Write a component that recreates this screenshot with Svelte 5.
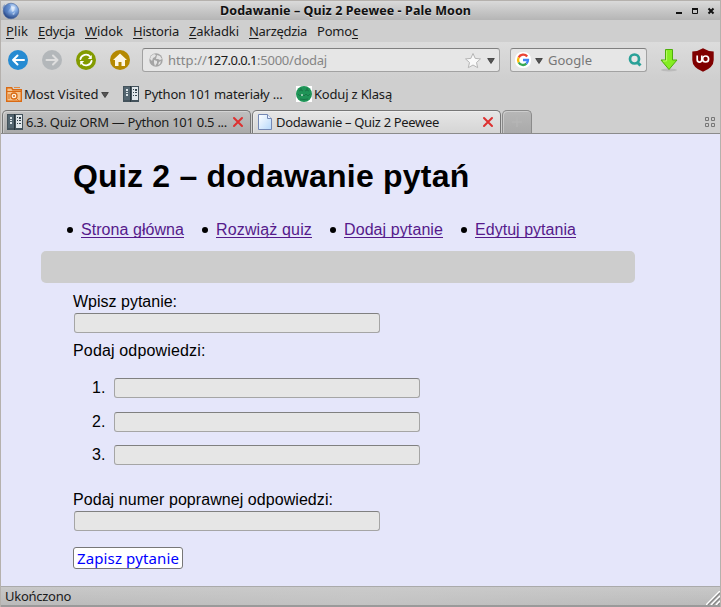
<script>
  const menu = [
    ['', 'P', 'lik', 22, 10],
    ['', 'E', 'dycja', 37, 10],
    ['', 'W', 'idok', 38, 10],
    ['', 'H', 'istoria', 46, 10],
    ['', 'Z', 'akładki', 50, 10],
    ['', 'N', 'arzędzia', 58, 10],
    ['Pomo', 'c', '', 41, 0]
  ];
  const links = [
    ['Strona główna', 103],
    ['Rozwiąż quiz', 96],
    ['Dodaj pytanie', 99],
    ['Edytuj pytania', 101]
  ];

  // Spreads the letters of a label over the given width.
  function fit(node, width) {
    const natural = node.getBoundingClientRect().width;
    const count = node.textContent.length;
    node.style.letterSpacing = (width - natural) / count + 'px';
  }
</script>

{#snippet book()}
  <svg class="i16" width="16" height="16" viewBox="0 0 16 16">
    <path d="M0 0h16v16H0z" fill="#43525b" />
    <path d="M1 1h6v13H1z" fill="#536570" /><path d="M9 1h6v13H9z" fill="#e0e6ea" />
    <path d="M3 3h2v2H3zM3 6h2v1H3zM3 8h2v2H3z" fill="#dce4e8" />
    <path d="M10 3h1v1h-1zM12 3h2v2h-2zM10 6h1v1h-1zM12 6h2v1h-2zM10 9h1v1h-1zM12 9h2v1h-2z" fill="#34434c" />
    <path d="M7 0h1v16H7z" fill="#26343c" />
  </svg>
{/snippet}

{#snippet caret()}
  <svg class="caret" width="8" height="6" viewBox="0 0 8 6"><path d="M.7.5h6.600L4 5.500z" fill="#555" stroke="#333" stroke-width=".8" /></svg>
{/snippet}

{#snippet cross()}
  <svg width="12" height="12" viewBox="0 0 12 12"><path d="M2 2l8 8M10 2l-8 8" stroke="#dd3030" stroke-width="2" stroke-linecap="round" /></svg>
{/snippet}

<div class="window">
  <header class="title">
    <svg class="globe" width="18" height="18" viewBox="0 0 18 18">
      <defs><radialGradient id="moon" cx=".62" cy=".3" r=".75"><stop offset="0" stop-color="#dce9fb" /><stop offset=".4" stop-color="#7ca5df" /><stop offset="1" stop-color="#1c3b7c" /></radialGradient></defs>
      <circle cx="9" cy="9" r="7.800" fill="url(#moon)" stroke="#4b689d" stroke-width=".6" />
      <path d="M3 5q3-4 5-2t-1 5-1 5-3-3 0-8" fill="#4a76bd" opacity=".5" />
      <path d="M9 4l4 1-1 4-2 1zM10 12l3-2-1 3z" fill="#eef5ff" opacity=".55" />
    </svg>
    <b use:fit={251}>Dodawanie – Quiz 2 Peewee - Pale Moon</b>
    <svg class="controls" width="40" height="8" viewBox="0 0 40 8">
      <path d="M1 5h6v2H1z" fill="#111" /><path d="M17.5 1.5h5v5h-5z" fill="none" stroke="#111" /><path d="M17 1h6v2h-6z" fill="#111" />
      <path d="M33.5 1.500l5 5M38.500 1.500l-5 5" stroke="#111" stroke-width="2" />
    </svg>
  </header>

  <nav class="menu">
    {#each menu as [pre, key, post, w, gap]}
      <div style:width="{w + gap}px"><span use:fit={w}>{pre}<u>{key}</u>{post}</span></div>
    {/each}
  </nav>

  <div class="toolbar">
    <svg class="nav" width="124" height="22" viewBox="0 0 124 22" fill="none" stroke-linecap="round" stroke-linejoin="round">
      <circle cx="11" cy="11" r="10" fill="#268bd2" /><path d="M6 11h11M10.500 6.500L6 11l4.500 4.500" stroke="#fff" stroke-width="2" />
      <circle cx="45" cy="11" r="10" fill="#b3b7ba" /><path d="M39.500 11h11M46 6.500l4.500 4.500-4.500 4.500" stroke="#dedede" stroke-width="2" />
      <circle cx="79" cy="11" r="10" fill="#839b00" />
      <path d="M73.400 10a5.700 5.700 0 0 1 9.800-2.500M84.600 12a5.700 5.700 0 0 1-9.800 2.500" stroke="#fff" stroke-width="1.800" />
      <path d="M84.800 6v4h-4zM73.200 16v-4h4z" fill="#fff" />
      <circle cx="113" cy="11" r="10" fill="#b58900" /><path d="M113 4.500l7 6.500h-2v6h-3.500v-4h-3v4H108v-6h-2z" fill="#fdf6e3" />
    </svg>
    <div class="url field">
      <svg width="14" height="14" viewBox="0 0 14 14">
        <circle cx="7" cy="7" r="6.700" fill="#a5a5a5" />
        <path d="M2 3l3-2 2 1-1 2-2 1-1 3-2-2zM8 2l3 1 2 3-2 1-2-1-2 0zM5 7l3 1 0 2-2 3-1-3zM10 9l2-1-1 3-2 1z" fill="#e4e4e4" />
      </svg>
      <span class="address"><i use:fit={39}>http://</i><em use:fit={50}>127.0.0.1</em><i use:fit={70}>:5000/dodaj</i></span>
      <svg class="star" width="18" height="17" viewBox="0 0 18 17"><path d="M9 1.500l2.200 4.900 5.300.5-4 3.600 1.200 5.200L9 13l-4.700 2.700 1.200-5.200-4-3.600 5.300-.5z" fill="#f9f9f9" stroke="#b5b5b5" stroke-linejoin="round" /></svg>
      {@render caret()}
    </div>
    <div class="search field">
      <svg width="16" height="16" viewBox="0 0 16 16">
        <rect width="16" height="16" rx="7" fill="#fff" />
        <g fill="none" stroke-width="2.300"><path d="M12.200 4.500A5 5 0 0 0 3.700 5.500" stroke="#ea4335" /><path d="M3.700 5.500a5 5 0 0 0 0 5" stroke="#fbbc05" /><path d="M3.700 10.500a5 5 0 0 0 7.700 1.200" stroke="#34a853" /><path d="M8 8h5a5 5 0 0 1-1.600 3.700" stroke="#4285f4" /></g>
      </svg>
      {@render caret()}
      <span class="hint" use:fit={44}>Google</span>
      <svg class="lens" width="14" height="14" viewBox="0 0 14 14"><circle cx="6.500" cy="6" r="4.500" fill="none" stroke="#2aa198" stroke-width="2.700" /><path d="M9 9l3.500 3.500" stroke="#2aa198" stroke-width="3" /></svg>
    </div>
    <svg class="download" width="20" height="24" viewBox="0 0 20 24">
      <ellipse cx="10" cy="22" rx="8" ry="1.500" fill="#bbb" />
      <path d="M6.500 1.500h7v10.500h4.500l-8 9.500-8-9.500h4.500z" fill="#85ed22" stroke="#4eae0b" stroke-linejoin="round" /><path d="M7.600 2.500V13H4" fill="none" stroke="#bdfb69" />
    </svg>
    <svg class="shield" width="22" height="24" viewBox="0 0 22 24">
      <path d="M11 .3Q16 3.500 21.700 3.500V12q0 7.500-10.700 11.700Q.3 19.500.3 12V3.500Q6 3.500 11 .3z" fill="#800000" />
      <path d="M5.200 7.500v4.300a2.300 2.300 0 0 0 4.600 0V7.500" fill="none" stroke="#fff" stroke-width="1.700" /><circle cx="13.600" cy="11" r="3" fill="none" stroke="#fff" stroke-width="1.700" />
    </svg>
  </div>

  <div class="bookmarks">
    <svg class="i16" width="16" height="16" viewBox="0 0 16 16">
      <path d="M.700 15.300V1.700h5l1 2h8.600v11.600z" fill="#f6c48c" stroke="#d96a13" stroke-width="1.400" /><path d="M1 5.500h14" stroke="#d96a13" /><path d="M8 1.500h6" stroke="#e58a3c" />
      <circle cx="8" cy="10" r="3" fill="#fff3df" stroke="#d96a13" stroke-width="1.300" /><circle cx="8" cy="10" r="1" fill="#d96a13" /><path d="M10.500 12.500l2 2M3 8v5" stroke="#d96a13" />
    </svg>
    <div class="b1"><span use:fit={74.5}>Most Visited</span></div>
    {@render caret()}
    <div class="b2">{@render book()}</div>
    <div class="b3"><span use:fit={138.5}>Python 101 materiały ...</span></div>
    <svg class="i16" width="16" height="16" viewBox="0 0 16 16"><path d="M0 0h16v16H0z" fill="#fff" /><circle cx="8" cy="8" r="8" fill="#1f9457" /><path d="M4 3h2M10 3h2M3 5q2-2 4 0M9 5q2-2 4 0M2 8l2 2 2-2 2 2 2-2 2 2 2-2M4 13q4 1 8 0" fill="none" stroke="#166a40" opacity=".7" /><circle cx="6" cy="9" r="1" fill="#bde0cc" /></svg>
    <div class="b4"><span use:fit={78}>Koduj z Klasą</span></div>
  </div>

  <div class="tabs">
    <div class="tab back">{@render book()}<div class="label"><span use:fit={201}>6.3. Quiz ORM — Python 101 0.5 ...</span></div>{@render cross()}</div>
    <div class="tab front">
      <svg width="14" height="16" viewBox="0 0 14 16"><defs><linearGradient id="page" x2="1" y2="1"><stop stop-color="#fff" /><stop offset="1" stop-color="#b5d8fb" /></linearGradient></defs><path d="M.5.5h9l4 4v11H.5z" fill="url(#page)" stroke="#7488b4" /><path d="M9.500.5v4h4" fill="#e9f2ff" stroke="#7488b4" /></svg>
      <div class="label"><span use:fit={163}>Dodawanie – Quiz 2 Peewee</span></div>{@render cross()}
    </div>
    <div class="tab plus"><svg width="10" height="10" viewBox="0 0 10 10"><path d="M5 0v10M0 5h10" stroke="#b5b5b5" stroke-width="1.500" /></svg></div>
    <svg class="groups" width="10" height="10" viewBox="0 0 10 10" fill="none" stroke="#777"><path d="M.5.5h3v3h-3zM6.500.5h3v3h-3zM.5 6.500h3v3h-3zM6.500 6.500h3v3h-3z" /></svg>
  </div>

  <main>
    <h1><span use:fit={396.5}>Quiz 2 – dodawanie pytań</span></h1>
    <ul>
      {#each links as [text, w]}
        <li style:width="{w}px"><a href="#top" use:fit={w}>{text}</a></li>
      {/each}
    </ul>
    <div class="flash"></div>
    <form>
      <label for="q">Wpisz pytanie:</label>
      <input id="q" />
      <p><span use:fit={132.5}>Podaj odpowiedzi:</span></p>
      <ol>
        {#each [1, 2, 3] as n}
          <li><span>{n}.</span><input aria-label={String(n)} /></li>
        {/each}
      </ol>
      <label for="a"><span use:fit={260}>Podaj numer poprawnej odpowiedzi:</span></label>
      <input id="a" />
      <button type="button"><span use:fit={102}>Zapisz pytanie</span></button>
    </form>
  </main>

  <footer>
    <span use:fit={66}>Ukończono</span>
    <svg width="14" height="14" viewBox="0 0 14 14"><path d="M0 14L14 0M5 14l9-9M10 14l4-4" stroke="#fff" stroke-width="1.500" /><path d="M2 14L14 2M7 14l7-7M12 14l2-2" stroke="#858585" stroke-width="1.300" /></svg>
  </footer>
</div>

<style>
  :global(body) { margin: 0; overflow: hidden; }
  .window {
    box-sizing: border-box; width: 721px; height: 607px; display: flex; flex-direction: column;
    border: 1px solid #b5b1ad; border-bottom: 0; background: #cfcfcf;
    font: 13px/16px "Noto Sans", "Open Sans", sans-serif; color: #1a1a1a; white-space: nowrap;
  }
  svg { flex: none; display: block; }
  span, b, i, em { display: inline-block; font-style: normal; }
  .title { height: 19px; flex: none; display: flex; align-items: center; background: linear-gradient(#dadada, #b5b5b5); }
  .title b { margin: 1px 0 0 200px; font-size: 12.500px; color: #111; text-shadow: 0 1px #ddd; }
  .globe { margin-left: 1px; }
  .controls { margin-left: auto; margin-right: 5px; }
  .menu { height: 22px; flex: none; display: flex; align-items: center; padding-left: 5px; }
  .menu u { text-decoration: underline; text-underline-offset: 2px; text-decoration-skip-ink: none; }
  .toolbar { box-sizing: border-box; height: 37px; flex: none; display: flex; align-items: center; padding-bottom: 1px; background: linear-gradient(#dcdcdc, #cfcfcf); }
  .nav { margin-left: 6px; }
  .field {
    box-sizing: border-box; height: 24px; display: flex; align-items: center;
    border: 1px solid #a2a2a2; border-top-color: #808080; border-radius: 3px; background: #e6e6e6;
  }
  .caret { margin-top: 2px; }
  .url { width: 358px; margin-left: 11px; padding: 0 4px 0 6px; }
  .address { display: flex; margin-left: 5px; color: #858585; }
  .address em { color: #1a1a1a; }
  .star { margin-left: auto; margin-right: 5px; }
  .search { width: 137px; margin-left: 10px; padding: 0 4px; }
  .search > .caret { margin-left: 4px; }
  .hint { margin-left: 5px; color: #777; }
  .lens { margin-left: auto; }
  .download { margin-left: 12px; }
  .shield { margin-left: 13px; }
  .bookmarks { box-sizing: border-box; height: 31px; flex: none; display: flex; align-items: center; padding: 0 0 1px 5px; }
  .b1 { width: 77px; margin-left: 2px; }
  .b2 { margin-left: 14px; }
  .b3 { width: 152px; margin-left: 5px; }
  .b4 { margin-left: 2px; }
  .tabs { height: 23px; flex: none; display: flex; align-items: stretch; border-bottom: 1px solid #8b8b8b; padding-left: 1px; }
  .tab {
    box-sizing: border-box; display: flex; align-items: center; border: 1px solid #777; border-bottom: 0;
    border-radius: 5px 5px 0 0; box-shadow: inset 1px 1px #ffffff50;
  }
  .back { width: 249px; padding-left: 4px; background: linear-gradient(#c0c0c0, #aaa); }
  .back .label { width: 206px; margin-left: 3px; }
  .front { width: 249px; margin-left: 1px; padding-left: 5px; background: linear-gradient(#e6e6e6, #d5d5d5); }
  .front .label { width: 206px; margin-left: 4px; }
  .plus { width: 30px; margin-left: 1px; justify-content: center; background: linear-gradient(#b7b7b7, #aaa); border-color: #8b8b8b; }
  .groups { margin: 7px 5px 0 auto; }
  main { height: 452px; flex: none; box-sizing: border-box; padding: 23px 0 0 72px; background: #e5e6fa; color: #000; font: 16px/18px "Liberation Sans", Arial, sans-serif; }
  h1 { margin: 0; font-size: 32px; line-height: 38px; }
  ul { display: flex; gap: 32px; margin: 26px 0 0; padding: 0 0 0 8px; list-style: none; }
  ul li { position: relative; }
  ul li::before { content: ""; position: absolute; left: -14px; top: 6px; width: 6px; height: 6px; border-radius: 50%; background: #000; }
  a { color: #551a8b; text-decoration: underline; text-decoration-skip-ink: none; text-underline-offset: 2px; }
  .flash { width: 594px; height: 32px; margin: 12px 0 0 -32px; border-radius: 5px; background: #cdcdcd; }
  form { display: flex; flex-direction: column; align-items: flex-start; padding-top: 10px; }
  input {
    box-sizing: border-box; width: 306px; height: 20px; margin: 2px 0 0 1px; padding: 0 3px;
    border: 1px solid #a5a5a5; border-top-color: #808080; border-radius: 3px; background: #e6e6e6;
  }
  label, p { height: 18px; }
  p { margin: 9px 0 0; }
  ol { margin: 18px 0 25.800px; padding: 0 0 0 19px; list-style: none; display: flex; flex-direction: column; gap: 13.600px; }
  ol li { display: flex; height: 20px; align-items: center; }
  ol span { width: 22px; }
  ol input { margin: 0; }
  button {
    box-sizing: border-box; width: 110px; height: 22px; margin-top: 16px; padding: 0 0 0 3px; text-align: left;
    border: 1px solid #777; border-radius: 3px; background: #fff; color: #00f; font: 15px/20px "Noto Sans", sans-serif;
  }
  footer { height: 21px; flex: none; box-sizing: border-box; display: flex; align-items: center; justify-content: space-between; padding-left: 4px; border-top: 1px solid #aaa; border-bottom: 2px solid #9a9a9a; background: linear-gradient(90deg, #c2c2c200, #cccccc80, #bbb0), linear-gradient(#c8c8c8, #bababa); }
  footer svg { margin-top: 4px; }
</style>
